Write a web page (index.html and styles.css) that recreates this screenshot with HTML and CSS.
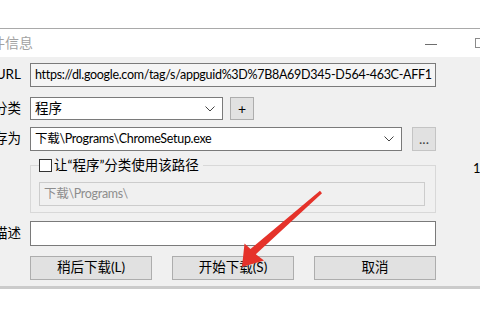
FILE: index.html
```html
<!DOCTYPE html>
<html lang="zh-CN">

<head>
  <meta charset="utf-8">
  <title>文件信息</title>
  <link rel="stylesheet" href="styles.css">
</head>

<body>
  <div class="backdrop"></div>

  <div class="window">
    <div class="titlebar">
      <span class="title">文件信息</span>
      <span class="controls">
        <span class="minimize"></span>
        <span class="maximize"></span>
      </span>
    </div>

    <div class="client">
      <div class="row row-url">
        <span class="label">URL</span>
        <div class="field readonly">https://dl.google.com/tag/s/appguid%3D%7B8A69D345-D564-463C-AFF1</div>
      </div>

      <div class="row row-category">
        <span class="label">分类</span>
        <div class="field combo combo-category">
          <span>程序</span>
          <svg class="chevron" width="10" height="6" viewBox="0 0 10 6"><polyline points="0.5,0.5 5,5 9.5,0.5" /></svg>
        </div>
        <div class="button small">+</div>
      </div>

      <div class="row row-path">
        <span class="label">存为</span>
        <div class="field combo combo-path">
          <span>下载\Programs\ChromeSetup.exe</span>
          <svg class="chevron" width="10" height="6" viewBox="0 0 10 6"><polyline points="0.5,0.5 5,5 9.5,0.5" /></svg>
        </div>
        <div class="button small faded">...</div>
      </div>

      <div class="row row-group">
        <fieldset class="group">
          <legend class="check">
            <span class="checkbox"></span>
            <span>让“程序”分类使用该路径</span>
          </legend>
          <div class="field disabled">下载\Programs\</div>
        </fieldset>
        <span class="stray">1</span>
      </div>

      <div class="row row-desc">
        <span class="label">描述</span>
        <div class="field"></div>
      </div>

      <div class="row actions">
        <div class="button">稍后下载(L)</div>
        <div class="button">开始下载(S)</div>
        <div class="button">取消</div>
      </div>
    </div>
  </div>

  <svg class="arrow" width="480" height="320" viewBox="0 0 480 320">
    <polygon points="242,267 244.5,243.5 250.5,249 320,190.8 322,193.2 255.8,254.2 264,260.5" />
  </svg>
</body>

</html>
```

FILE: styles.css
```css
* {
  box-sizing: border-box;
}

html,
body {
  margin: 0;
  background-color: #fff;
}

body {
  width: 480px;
  height: 320px;
  overflow: hidden;
  position: relative;
  font-family: Lato, "Noto Sans CJK SC", sans-serif;
  font-size: 13.5px;
  color: #000;
}

.backdrop {
  height: 28px;
}

.window {
  margin-left: -20px;
  width: 520px;
  border-top: 1px solid #a9a9a9;
  border-bottom: 3px solid #cbcbcb;
}

.titlebar {
  height: 28px;
  background-color: #fff;
  display: flex;
  align-items: center;
  justify-content: space-between;
}

.title {
  margin-left: -3px;
  font-size: 14px;
  color: #a2a2a2;
  line-height: 1;
}

.controls {
  display: flex;
  align-items: center;
  gap: 38px;
  margin-right: 15px;
}

.minimize {
  width: 12px;
  height: 1px;
  background-color: #6e6e6e;
  margin-top: 2px;
}

.maximize {
  width: 10px;
  height: 10px;
  border: 1px solid #8a8a8a;
}

.client {
  background-color: #f0f0f0;
  padding: 6px 0 6px 0;
}

.row {
  display: flex;
  align-items: center;
  padding-left: 50px;
  position: relative;
  line-height: 1;
}

.label {
  position: absolute;
  left: 0;
  width: 41px;
  display: flex;
  justify-content: flex-end;
  white-space: nowrap;
}

.field {
  width: 406px;
  height: 24px;
  border: 1px solid #7a7a7a;
  background-color: #fff;
  display: flex;
  align-items: center;
  padding: 0 4px;
  font-size: 12.5px;
  letter-spacing: -0.3px;
  white-space: nowrap;
  overflow: hidden;
}

.readonly {
  background-color: #f5f5f5;
}

.row-category {
  margin-top: 10px;
}

.combo {
  justify-content: space-between;
  padding-right: 7px;
}

.combo-category {
  width: 193px;
  height: 23px;
  font-size: 13.5px;
  letter-spacing: 0;
}

.combo-path {
  width: 372px;
}

.chevron {
  fill: none;
  stroke: #444;
  stroke-width: 1;
}

.row-path {
  margin-top: 7px;
}

.row-path .button {
  margin-left: 10px;
}

.row-category .button {
  margin-left: 7px;
  height: 23px;
}

.button {
  height: 24px;
  width: 122px;
  background-color: #e1e1e1;
  border: 1px solid #adadad;
  display: flex;
  align-items: center;
  justify-content: center;
  white-space: nowrap;
}

.button.small {
  width: 24px;
  font-size: 14px;
}

.button.faded {
  border-color: #c4c4c4;
  color: #444;
}

.row-group {
  margin-top: 7px;
}

.group {
  width: 406px;
  margin: 0;
  padding: 9px 10px 6px 8px;
  border: 1px solid #d8d8d8;
  min-width: 0;
}

.check {
  display: flex;
  align-items: center;
  gap: 2px;
  padding: 0 4px 0 0;
  height: 15px;
  line-height: 1;
}

.checkbox {
  width: 13px;
  height: 13px;
  border: 1px solid #333;
  background-color: #fff;
}

.disabled {
  width: 386px;
  background-color: #f0f0f0;
  border-color: #cccccc;
  color: #8d8d8d;
}

.stray {
  margin-left: 37px;
  margin-top: -34px;
  font-size: 13px;
}

.row-desc {
  margin-top: 8px;
}

.row-desc .field {
  height: 25px;
}

.actions {
  margin-top: 10px;
  gap: 20px;
}

.arrow {
  position: absolute;
  left: 0;
  top: 0;
  pointer-events: none;
}

.arrow polygon {
  fill: #e5322a;
}
```
